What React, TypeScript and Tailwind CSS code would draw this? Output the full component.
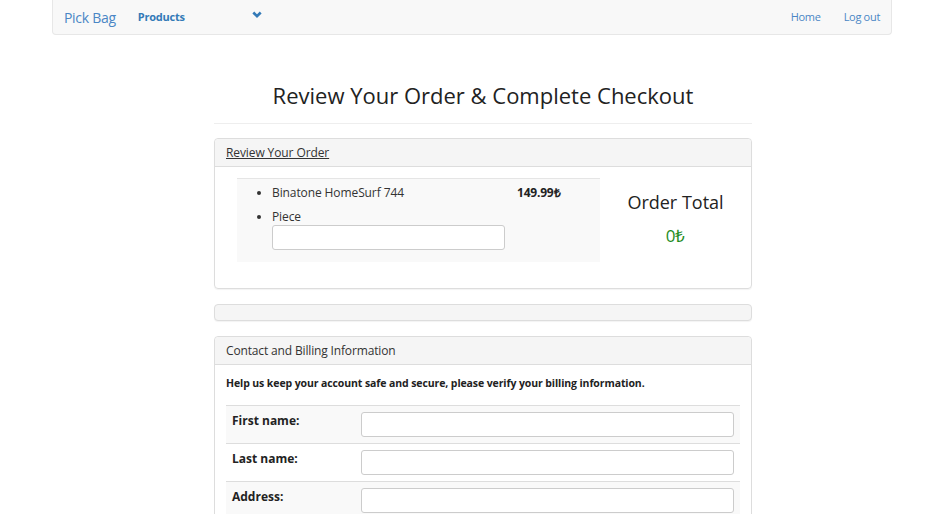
import React from "react";

export default function App() {
  const font = { fontFamily: '"Open Sans", "Liberation Sans", sans-serif' };
  return (
    <div className="min-h-[514px] bg-white text-[#333]" style={font}>
      {/* Navbar */}
      <div className="ml-[52px] mr-[51px] h-[35px] bg-[#f8f8f8] border border-t-0 border-[#e7e7e7] rounded-b-[4px] flex items-center">
        <span className="ml-[11px] text-[14px] tracking-[-0.3px] text-[#4a86c5]">Pick Bag</span>
        <span className="ml-[22px] text-[11px] tracking-[-0.2px] font-bold text-[#337ab7]">Products</span>
        <svg className="ml-[67px] -mt-[4px]" width="10" height="8" viewBox="0 0 10 8">
          <path d="M1.3 1.5 L5 5.2 L8.7 1.5" fill="none" stroke="#337ab7" strokeWidth="2.6" />
        </svg>
        <div className="ml-auto flex items-center gap-[23px] mr-[11px] text-[11px] tracking-[-0.3px] text-[#4a86c5]">
          <span>Home</span>
          <span>Log out</span>
        </div>
      </div>

      <div className="ml-[214px] w-[538px]">
        <h1 className="text-center text-[22px] leading-[32px] mt-[44px] text-[#222]">
          Review Your Order &amp; Complete Checkout
        </h1>
        <div className="mt-[12px] border-t border-[#eee]" />

        {/* Panel 1 */}
        <div className="mt-[14px] border border-[#ddd] rounded-[4px] shadow-[0_1px_1px_rgba(0,0,0,0.05)]">
          <div className="h-[28px] bg-[#f5f5f5] border-b border-[#ddd] rounded-t-[4px] flex items-center px-[11px]">
            <span className="text-[12px] tracking-[-0.1px] underline text-[#333]">Review Your Order</span>
          </div>
          <div className="flex pl-[22px] pt-[11px] pb-[26px]">
            <div className="w-[363px] h-[84px] bg-[#f9f9f9] border-t border-[#e5e5e5] pt-[2px]">
              <ul className="list-disc pl-[35px] text-[12px] tracking-[-0.1px]">
                <li className="leading-[24px]">
                  <div className="flex">
                    <span className="w-[245px]">Binatone HomeSurf 744</span>
                    <span className="font-bold text-[12px] tracking-[-0.2px] text-[#222]">149.99₺</span>
                  </div>
                </li>
                <li className="leading-[24px]">Piece</li>
              </ul>
              <div className="-mt-[4px] ml-[35px] w-[233px] h-[25px] bg-white border border-[#ccc] rounded-[3px]" />
            </div>
            <div className="flex-1 flex flex-col items-center pt-[11px]">
              <span className="text-[18px] leading-[26px] text-[#222]">Order Total</span>
              <span className="mt-[9px] text-[17px] leading-[24px] text-[#1e8c1e]">0₺</span>
            </div>
          </div>
        </div>

        {/* Panel 2 (empty) */}
        <div className="mt-[15px] h-[17px] bg-[#f5f5f5] border border-[#ddd] rounded-[4px] shadow-[0_1px_1px_rgba(0,0,0,0.05)]" />

        {/* Panel 3 */}
        <div className="mt-[15px] border border-[#ddd] rounded-t-[4px]">
          <div className="h-[28px] bg-[#f5f5f5] border-b border-[#ddd] rounded-t-[4px] flex items-center px-[11px]">
            <span className="text-[12px] tracking-[-0.15px] text-[#333]">Contact and Billing Information</span>
          </div>
          <div className="px-[11px] pt-[10px]">
            <p className="text-[10.5px] tracking-[-0.1px] font-bold leading-[16px] text-[#222]">
              Help us keep your account safe and secure, please verify your billing information.
            </p>
            <div className="mt-[14px]">
              {["First name:", "Last name:", "Address:"].map((l, i) => (
                <div
                  key={l}
                  className={`flex h-[38px] border-t border-[#ddd] ${i % 2 === 0 ? "bg-[#f9f9f9]" : "bg-white"}`}
                >
                  <div className="w-[135px] pl-[6px] pt-[6px] text-[12px] font-bold text-[#222]">{l}</div>
                  <div className="pt-[6px]">
                    <div className="w-[373px] h-[25px] bg-white border border-[#ccc] rounded-[3px]" />
                  </div>
                </div>
              ))}
            </div>
          </div>
        </div>
      </div>
    </div>
  );
}
